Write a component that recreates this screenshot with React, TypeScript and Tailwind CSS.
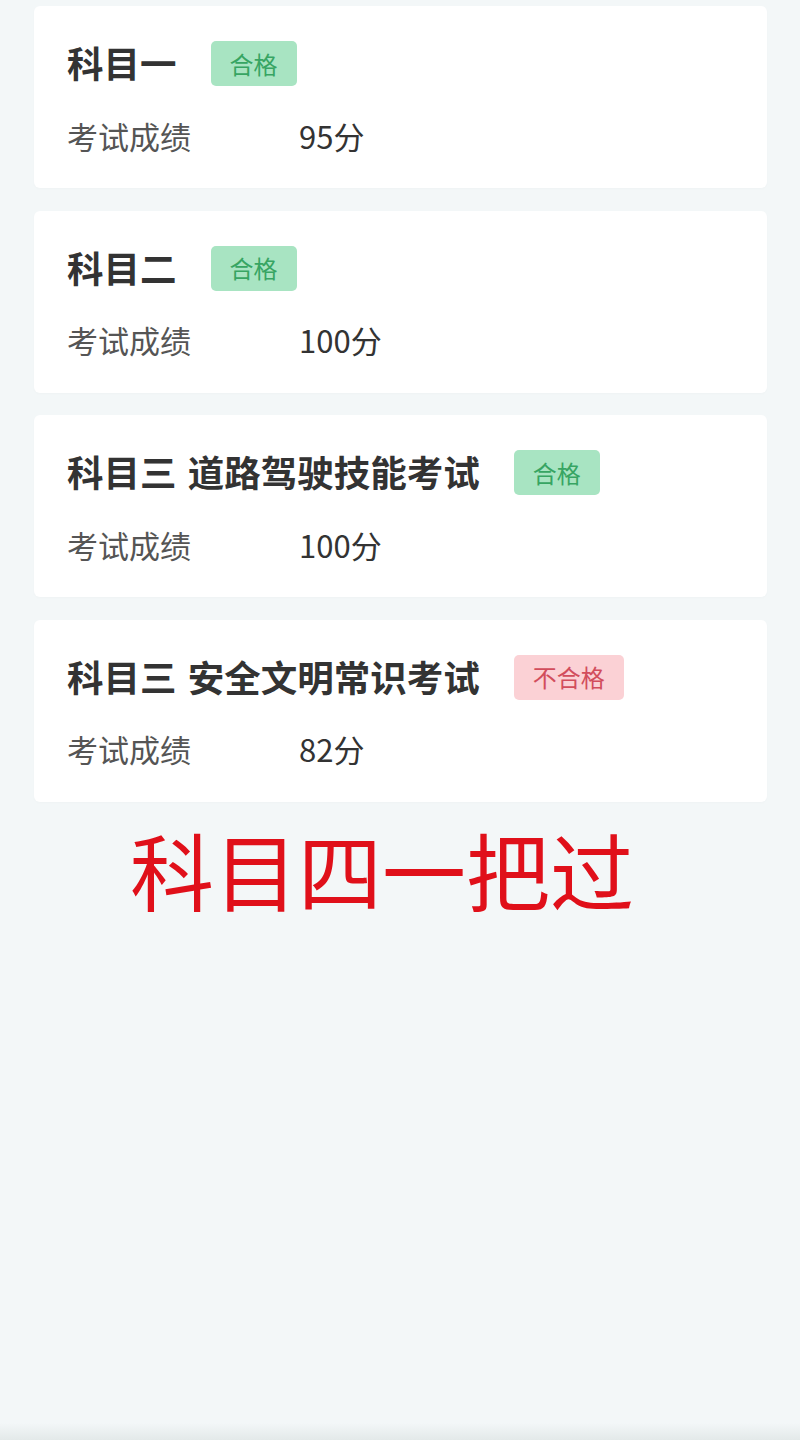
import React from "react";

type Result = {
  title: string;
  score: number;
  passed: boolean;
};

const results: Result[] = [
  { title: "科目一", score: 95, passed: true },
  { title: "科目二", score: 100, passed: true },
  { title: "科目三 道路驾驶技能考试", score: 100, passed: true },
  { title: "科目三 安全文明常识考试", score: 82, passed: false },
];

const font = "font-['Noto_Sans_CJK_SC','Noto_Sans',sans-serif]";

function StatusTag({ passed }: { passed: boolean }) {
  return (
    <span
      className={`ml-[34px] flex h-[45px] items-center rounded-[5px] px-[19px] text-[24px] leading-none ${
        passed ? "bg-[#a8e4c2] text-[#37a563]" : "bg-[#fbd1d5] text-[#d24d5c]"
      }`}
    >
      {passed ? "合格" : "不合格"}
    </span>
  );
}

function ResultCard({ item }: { item: Result }) {
  return (
    <div className="h-[182px] rounded-[6px] bg-white px-[33px] pt-[35px] shadow-[0_1px_3px_rgba(0,0,0,0.02)]">
      <div className="flex h-[45px] items-center">
        <h2 className="text-[36.5px] leading-none font-semibold text-[#333333] [word-spacing:3px]">
          {item.title}
        </h2>
        <StatusTag passed={item.passed} />
      </div>
      <div className="mt-[29px] flex h-[40px] items-center text-[31px] leading-none">
        <span className="w-[232px] text-[#555555]">考试成绩</span>
        <span className="text-[#333333]">{item.score}分</span>
      </div>
    </div>
  );
}

export default function App() {
  return (
    <div className={`flex min-h-[1440px] flex-col bg-[#f3f7f8] ${font}`}>
      <div className="flex flex-col gap-[22.5px] px-[34px] pt-[6px] pr-[33px]">
        {results.map((item) => (
          <ResultCard key={item.title} item={item} />
        ))}
      </div>

      <p className="mt-[25px] pl-[130px] text-[84px] leading-none text-[#e0101a]">科目四一把过</p>

      <div className="flex-1" />
      <div className="h-[17px] bg-gradient-to-b from-[#f3f7f8] to-[#e3e9e9]" />
    </div>
  );
}
